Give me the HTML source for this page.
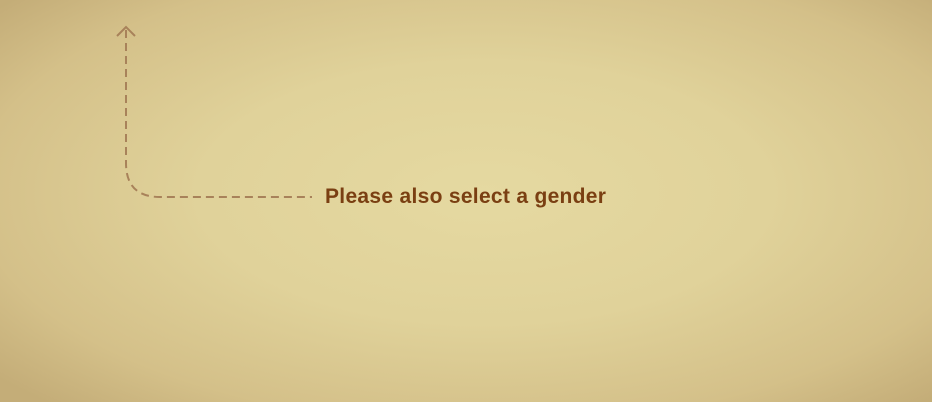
<!DOCTYPE html>
<html><head><style>
html,body{margin:0;padding:0}
body{width:932px;height:402px;overflow:hidden;position:relative;
background:radial-gradient(ellipse 68% 72% at 52% 48%,#e5d9a1 0%,#e0d29a 45%,#d4c089 80%,#c4ad78 100%);}
.t{position:absolute;left:325px;top:185px;font:bold 21px "Liberation Sans",sans-serif;color:#7a3f12;letter-spacing:0.3px;white-space:nowrap}
svg{position:absolute;left:0;top:0}
</style></head><body>
<svg width="932" height="402">
<path d="M126 30 V163 Q126 197 160 197 H312" fill="none" stroke="#a8825a" stroke-width="2" stroke-dasharray="8 5"/>
<path d="M117 36 L126 27 L135 36" fill="none" stroke="#a8825a" stroke-width="2"/>
</svg>
<div class="t">Please also select a gender</div>
</body></html>
